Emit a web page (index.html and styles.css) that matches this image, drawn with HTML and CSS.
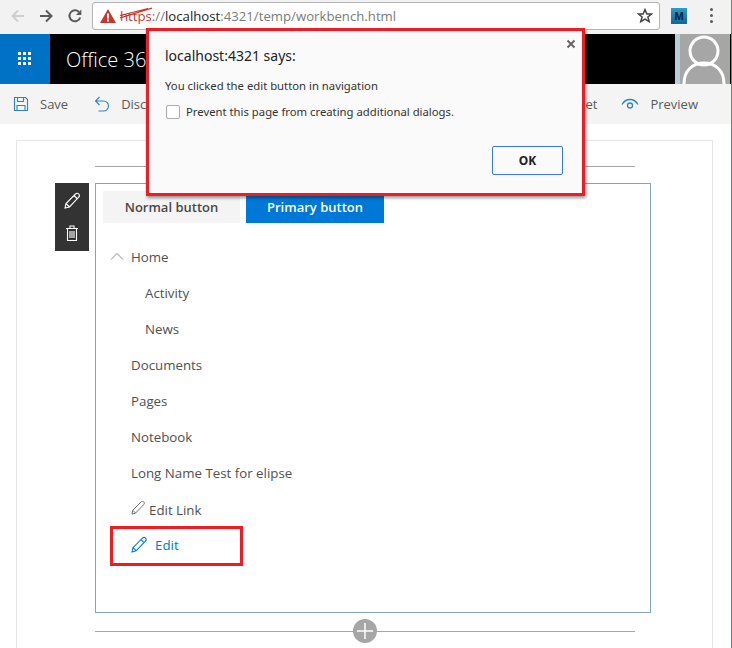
FILE: index.html
```html
<!DOCTYPE html>
<html lang="en">
<head>
<meta charset="utf-8">
<title>Workbench</title>
<link rel="stylesheet" href="styles.css">
</head>
<body>
<div class="browser">
  <svg class="nav-ic back" viewBox="0 0 16 16"><path d="M14 8H2.500M8 2.500 2.500 8 8 13.500"/></svg>
  <svg class="nav-ic fwd" viewBox="0 0 16 16"><path d="M2 8h11.500M8 2.500 13.500 8 8 13.500"/></svg>
  <svg class="nav-ic reload" viewBox="0 0 16 16"><path d="M13.200 9.500A5.500 5.500 0 1 1 12 4.100"/><path class="fill" d="M14.300 1.600v5.300H9z"/></svg>
  <div class="omnibox">
    <svg class="warn" viewBox="0 0 16 14"><path d="M8 0 16 14H0z"/><rect x="7" y="4.500" width="2" height="5" fill="#fff"/><rect x="7" y="10.500" width="2" height="2" fill="#fff"/></svg>
    <span class="url"><span class="https">https<svg class="strike" viewBox="0 0 32 12"><path d="M0 11 32 1M0 8.500 28 1.500"/></svg></span>://<span class="host">localhost</span>:4321/temp/workbench.html</span>
    <svg class="star" viewBox="0 0 16 16"><path d="M8 1.600 9.900 6h4.700l-3.700 3 1.300 4.700L8 11.100l-4.200 2.600L5.100 9 1.400 6h4.700z"/></svg>
  </div>
  <div class="ext">M</div>
  <div class="dots"><i></i><i></i><i></i></div>
</div>

<header class="suite">
  <div class="waffle">
    <svg viewBox="0 0 14 14"><path d="M0 0h3v3H0zM5 0h3v3H5zM10 0h3v3h-3zM0 5h3v3H0zM5 5h3v3H5zM10 5h3v3h-3zM0 10h3v3H0zM5 10h3v3H5zM10 10h3v3h-3z"/></svg>
  </div>
  <div class="brand">Office 365</div>
  <div class="avatar">
    <svg viewBox="0 0 50 50"><circle cx="24" cy="17" r="14"/><path d="M4 50c0-14 9-21 20-21s20 7 20 21"/></svg>
  </div>
</header>

<div class="commands">
  <div class="cmd"><svg class="cmd-ic" viewBox="0 0 16 16"><path d="M1.500 1.500h11l2 2v11h-13zM4.500 1.500v4h6v-4M4 14.500v-5h8v5"/></svg><span>Save</span></div>
  <div class="cmd discard"><svg class="cmd-ic" viewBox="0 0 16 16"><path d="M5.500 1 1.500 5l4 4M1.500 5h8a5 5 0 0 1 0 10h-5"/></svg><span>Discard changes</span></div>
  <div class="cmd-spacer"></div>
  <div class="cmd"><span>Tablet</span></div>
  <div class="cmd preview"><svg class="cmd-ic eye" viewBox="0 0 18 12"><path d="M1 6.500C3 3 6 1.500 9 1.500s6 1.500 8 5"/><circle cx="9" cy="7.500" r="2.500"/></svg><span>Preview</span></div>
</div>

<main class="canvas">
  <section class="card">
    <div class="rule"></div>
    <div class="zone">
      <div class="tools">
        <svg viewBox="0 0 18 18"><path d="M2 16l1-4.500L12.500 2c1-1 2.500-.8 3.200 0s1 2.200 0 3.200L6.500 15zM3 11.500l3.500 3.500M11 3.500l3.500 3.500"/></svg>
        <svg viewBox="0 0 18 18"><path d="M3 4.500h12M7 4.500V2h4v2.500M4.500 4.500V16.500h9V4.500M7 7v7M9 7v7M11 7v7"/></svg>
      </div>
      <div class="webpart">
        <div class="buttons">
          <button class="btn normal" type="button">Normal button</button>
          <button class="btn primary" type="button">Primary button</button>
        </div>
        <ul class="navlist">
          <li class="item"><svg class="chev" viewBox="0 0 14 8"><path d="M1 7.500 7 1.500l6 6"/></svg>Home</li>
          <li class="item sub">Activity</li>
          <li class="item sub">News</li>
          <li class="item">Documents</li>
          <li class="item">Pages</li>
          <li class="item">Notebook</li>
          <li class="item">Long Name Test for elipse</li>
          <li class="item editlink"><svg class="pen" viewBox="0 0 16 16"><path d="M1 15l.8-4L10.800 2c.8-.8 2-.8 2.800 0s.8 2 0 2.800L4.800 14zM2 11l3 3"/></svg>Edit Link</li>
          <li class="item edit"><svg class="pen blue" viewBox="0 0 16 16"><path d="M1 15l.8-4L10.800 2c.8-.8 2-.8 2.800 0s.8 2 0 2.800L4.800 14zM2 11l3 3M9.500 3.500l3 3"/></svg>Edit<span class="callout"></span></li>
        </ul>
      </div>
    </div>
    <div class="adder"><span class="plus"><svg viewBox="0 0 24 24"><path d="M12 4v16M4 12h16"/></svg></span></div>
  </section>
</main>

<div class="dialog" role="dialog">
  <svg class="close" viewBox="0 0 10 10"><path d="M1.500 1.500l7 7M8.500 1.500l-7 7"/></svg>
  <p class="d-title">localhost:4321 says:</p>
  <p class="d-msg">You clicked the edit button in navigation</p>
  <label class="d-check"><span class="box"></span>Prevent this page from creating additional dialogs.</label>
  <div class="d-actions"><button class="ok" type="button">OK</button></div>
</div>
</body>
</html>
```
FILE: styles.css
```css
* { box-sizing: border-box; }
html, body { margin: 0; padding: 0; }
body {
  width: 732px; height: 648px; overflow: hidden; position: relative;
  background: #fff; font-family: "Open Sans", "Liberation Sans", sans-serif; color: #505050;
  border-right: 1px solid #5e8f74;
}
ul { list-style: none; margin: 0; padding: 0; }
p { margin: 0; }

.browser { height: 34px; background: #f2f2f2; display: flex; align-items: center; padding: 0 0 3px 10px; }
.nav-ic { width: 16px; height: 16px; fill: none; stroke: #5a5a5a; stroke-width: 2; flex: none; }
.nav-ic.back { stroke: #cfcfcf; }
.nav-ic.fwd { margin-left: 12px; }
.nav-ic.reload { margin-left: 13px; }
.nav-ic .fill { fill: #5a5a5a; stroke: none; }
.omnibox {
  width: 568px; height: 28px; margin-left: 9px; flex: none;
  background: #fff; border: 1px solid #b4b4b4; border-radius: 3px;
  display: flex; align-items: center; padding-left: 7px; position: relative;
}
.warn { width: 16px; height: 14px; fill: #c5392c; flex: none; }
.url { margin-left: 4px; font-size: 13.200px; color: #7a7a7a; white-space: nowrap; }
.https { color: #c5392c; position: relative; }
.host { color: #222; }
.strike { position: absolute; left: 0; top: 0; width: 32px; height: 12px; fill: none; stroke: #c5392c; stroke-width: 1.200; }
.star { position: absolute; right: 6px; top: 5px; width: 16px; height: 16px; fill: none; stroke: #444; stroke-width: 1.500; }
.ext {
  width: 16px; height: 16px; margin-left: 11px; flex: none;
  background: linear-gradient(#2a9ad0, #0f6a94); color: #0b2233;
  font: bold 11px/16px "Liberation Sans", sans-serif; text-align: center;
}
.dots { margin-left: 23px; display: flex; flex-direction: column; gap: 3px; }
.dots i { width: 3px; height: 3px; background: #5a5a5a; border-radius: 50%; display: block; }

.suite { height: 50px; background: #000; display: flex; align-items: center; }
.waffle { width: 50px; height: 50px; background: #0072c6; display: flex; align-items: center; justify-content: center; }
.waffle svg { width: 14px; height: 14px; fill: #fff; }
.brand { margin-left: 16px; color: #fff; font: 300 20px/50px "Open Sans", sans-serif; flex: 1; padding-top: 2px; }
.avatar { width: 55px; height: 50px; background: #a6a6a6; border-left: 5px solid #b9cdd8; margin-right: 1px; }
.avatar svg { display: block; width: 50px; height: 50px; fill: none; stroke: #fff; stroke-width: 3; }

.commands { height: 40px; background: #f4f4f4; display: flex; align-items: center; padding-left: 13px; font-size: 13px; color: #5a5a5a; }
.cmd { display: flex; align-items: center; white-space: nowrap; }
.cmd-ic { width: 16px; height: 16px; fill: none; stroke: #2f84c9; stroke-width: 1.100; margin-right: 11px; }
.discard { margin-left: 26px; }
.cmd-spacer { flex: 1; }
.preview { margin-left: 24px; margin-right: 33px; }
.eye { width: 18px; height: 12px; margin-right: 11px; stroke-width: 1.300; }

.canvas { padding: 16px 18px 0 16px; }
.card { border: 1px solid #e6e6e6; border-bottom: 0; height: 524px; padding: 25px 0 0 78px; }
.rule { width: 540px; height: 1px; background: #a6a6a6; }
.zone { display: flex; margin-top: 16px; margin-left: -40px; }
.tools {
  width: 34px; height: 68px; background: #333; flex: none; margin-right: 6px;
  display: flex; flex-direction: column; align-items: center; justify-content: space-around; padding: 2px 0;
}
.tools svg { width: 18px; height: 18px; fill: none; stroke: #fff; stroke-width: 1.100; }
.webpart { width: 556px; height: 430px; border: 1px solid #87a3b8; padding: 7px 0 0 7px; }
.buttons { display: flex; gap: 6px; }
.btn { height: 32px; width: 137px; border: 0; font: 600 13px "Open Sans", sans-serif; padding: 0; }
.btn.normal { background: #f4f4f4; color: #484848; }
.btn.primary { background: #0078d7; color: #fff; width: 138px; }
.navlist { margin-top: 16px; }
.item { height: 36px; line-height: 36px; padding-left: 28px; font-size: 13.300px; color: #505050; position: relative; white-space: nowrap; }
.item.sub { padding-left: 42px; }
.chev { position: absolute; left: 7px; top: 13px; width: 14px; height: 8px; fill: none; stroke: #888; stroke-width: 1; }
.pen { width: 15px; height: 15px; fill: none; stroke: #666; stroke-width: 1; vertical-align: 0; margin-right: 3px; }
.editlink { padding-top: 1px; line-height: 37px; }
.edit { color: #0078d7; height: 34px; line-height: 36px; }
.pen.blue { width: 17px; height: 17px; stroke: #0078d7; margin-right: 7px; vertical-align: -3px; }
.callout { position: absolute; left: 7px; top: -1px; width: 133px; height: 40px; border: 3px solid #ee1c25; }

.adder { width: 540px; margin-top: 18px; height: 1px; background: #a6a6a6; position: relative; }
.plus {
  position: absolute; left: 258px; top: -12px; width: 24px; height: 24px; border-radius: 50%;
  background: #a6a6a6; display: flex; align-items: center; justify-content: center;
}
.plus svg { width: 24px; height: 24px; fill: none; stroke: #fff; stroke-width: 1.500; }

.dialog {
  position: absolute; left: 146px; top: 28px; width: 439px; height: 168px;
  background: #fafafa; border: 3px solid #ee1c25; box-shadow: 1px 2px 3px rgba(0,0,0,.4);
  padding: 16px 16px 0; font-family: "Noto Sans", "Open Sans", sans-serif; color: #333;
}
.close { position: absolute; right: 6px; top: 8px; width: 10px; height: 10px; fill: none; stroke: #666; stroke-width: 2; }
.d-title { font-size: 14px; line-height: 18px; color: #222; }
.d-msg { font-size: 11.300px; line-height: 16px; margin-top: 13px; }
.d-check { display: flex; align-items: center; font-size: 11.300px; line-height: 16px; margin-top: 10px; }
.box { width: 14px; height: 14px; border: 1px solid #aaa; border-radius: 2px; background: #fff; margin-right: 6px; margin-left: 1px; }
.d-actions { display: flex; justify-content: flex-end; margin-top: 26px; padding-right: 3px; }
.ok {
  width: 71px; height: 29px; background: #fafafa; border: 1px solid #3b78e7; border-radius: 2px;
  font: bold 12px "Noto Sans", sans-serif; color: #222; padding: 0;
}
```
